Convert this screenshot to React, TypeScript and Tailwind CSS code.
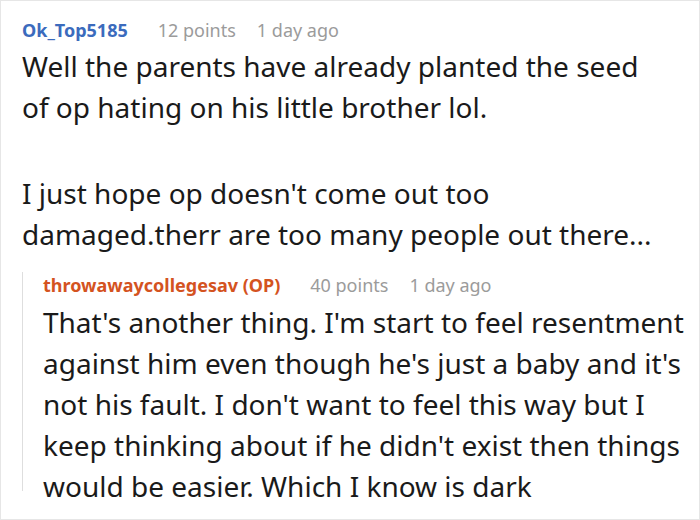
import React from 'react';

const font = { fontFamily: '"Noto Sans", "Open Sans", sans-serif' };

type CommentHeaderProps = {
  user: string;
  color: string;
  points: string;
  age: string;
  className?: string;
};

const CommentHeader = ({ user, color, points, age, className = '' }: CommentHeaderProps) => (
  <div className={`flex items-baseline text-[18px] leading-[26px] whitespace-nowrap ${className}`}>
    <span className={`font-bold ${color}`}>{user}</span>
    <span className="text-[#9b9b9b] ml-[30px]">{points}</span>
    <span className="text-[#9b9b9b] ml-[21px]">{age}</span>
  </div>
);

// line breaks kept as in the screenshot
const Lines = ({ lines }: { lines: string[] }) => (
  <>
    {lines.map((l) => (
      <span key={l} className="block whitespace-nowrap">
        {l}
      </span>
    ))}
  </>
);

export default function App() {
  return (
    <div className="w-[700px] h-[520px] bg-white border border-[#e6e6e6] overflow-hidden" style={font}>
      <div className="pl-[21px] pt-[16px]">
        {/* Top comment */}
        <CommentHeader user="Ok_Top5185" color="text-[#3b6bbd]" points="12 points" age="1 day ago" />
        <div className="text-[28px] leading-[41px] text-[#1a1a1a] mt-[3px]">
          <p>
            <Lines lines={['Well the parents have already planted the seed', 'of op hating on his little brother lol.']} />
          </p>
          <p className="mt-[45px]">
            <Lines lines={["I just hope op doesn't come out too", 'damaged.therr are too many people out there...']} />
          </p>
        </div>

        {/* Reply from OP */}
        <div className="mt-[28px] h-[219px] border-l border-[#dedede] pl-[20px]">
          <CommentHeader
            className="-mt-[11px]"
            user="throwawaycollegesav (OP)"
            color="text-[#d4531f]"
            points="40 points"
            age="1 day ago"
          />
          <p className="text-[28px] leading-[41px] text-[#1a1a1a] mt-[4px]">
            <Lines
              lines={[
                "That's another thing. I'm start to feel resentment",
                "against him even though he's just a baby and it's",
                "not his fault. I don't want to feel this way but I",
                "keep thinking about if he didn't exist then things",
                'would be easier. Which I know is dark',
              ]}
            />
          </p>
        </div>
      </div>
    </div>
  );
}
